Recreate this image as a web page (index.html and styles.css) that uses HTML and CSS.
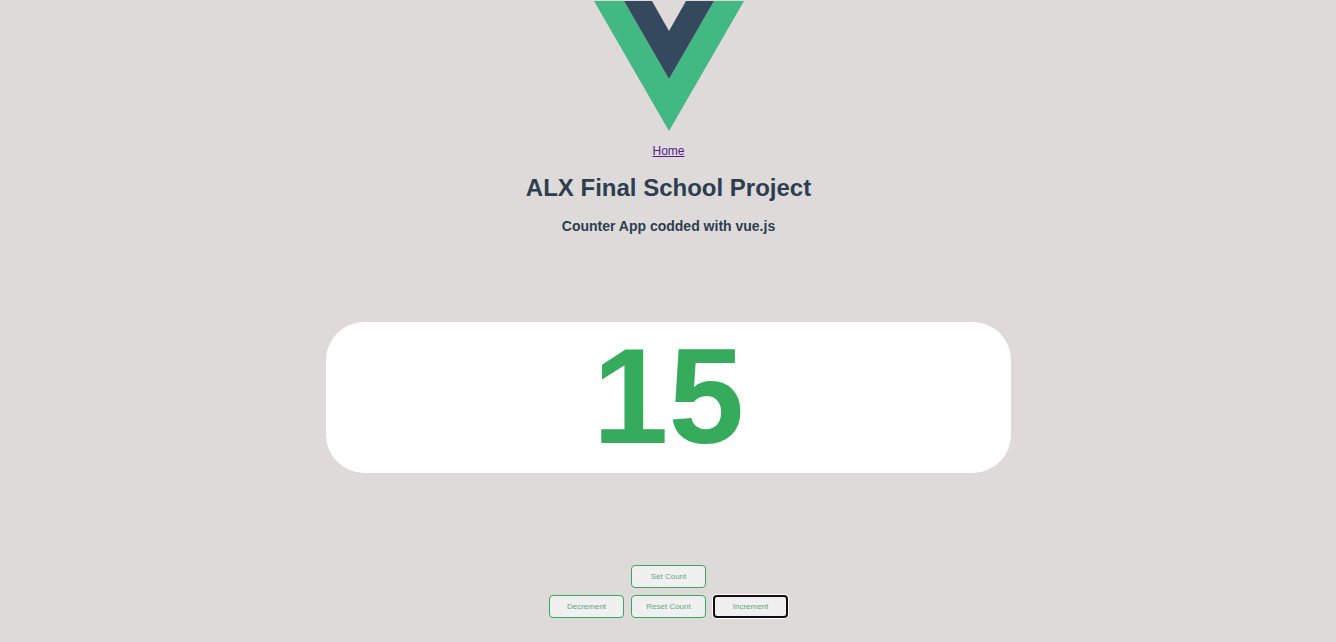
FILE: index.html
```html
<!DOCTYPE html>
<html lang="en">
<head>
<meta charset="utf-8">
<title>Counter App</title>
<link rel="stylesheet" href="styles.css">
</head>
<body>
<div class="app">
  <svg class="logo" viewBox="0 0 150 130" role="img" aria-label="Vue logo">
    <path fill="#42b883" d="M0 0h30l45 78 45-78h30L75 130z"/>
    <path fill="#35495e" d="M30 0h28l17 30 17-30h28L75 78z"/>
  </svg>
  <nav class="nav"><a class="nav-link" href="#">Home</a></nav>
  <h1 class="title">ALX Final School Project</h1>
  <h2 class="subtitle">Counter App codded with vue.js</h2>
  <output class="counter">15</output>
  <div class="controls">
    <button class="btn" type="button">Set Count</button>
    <div class="row">
      <button class="btn" type="button">Decrement</button>
      <button class="btn" type="button">Reset Count</button>
      <button class="btn btn-active" type="button">Increment</button>
    </div>
  </div>
</div>
</body>
</html>
```
FILE: styles.css
```css
body {
  margin: 0;
  background: #dedad9;
  color: #2c3e50;
  font-family: "Liberation Sans", Arial, sans-serif;
}
.app {
  display: flex;
  flex-direction: column;
  align-items: center;
  padding: 1px 0 16px 1px;
}
.logo {
  width: 150px;
  height: 130px;
}
.nav {
  margin-top: 12px;
  font-size: 12px;
  line-height: 16px;
}
.nav-link {
  color: #551a8b;
}
.title {
  margin: 15px 0 0;
  font-size: 24px;
  line-height: 28px;
}
.subtitle {
  margin: 16px 0 0;
  font-size: 14px;
  line-height: 16px;
}
.counter {
  box-sizing: border-box;
  width: 51.3%;
  margin-top: 88px;
  padding-bottom: 2px;
  border-radius: 38px;
  background: #fff;
  color: #35ab5b;
  font-size: 136px;
  font-weight: 700;
  line-height: 149px;
  text-align: center;
}
.controls {
  display: flex;
  flex-direction: column;
  align-items: center;
  gap: 7px;
  margin-top: 92px;
}
.row {
  display: flex;
  gap: 7px;
}
.btn {
  box-sizing: border-box;
  width: 75px;
  height: 23px;
  padding: 0;
  border: 1px solid #35ab5b;
  border-radius: 4px;
  background: #f0f0f0;
  color: #62a87c;
  font-family: inherit;
  font-size: 8px;
}
.btn-active {
  border: 2px solid #101010;
  box-shadow: 0 0 0 1px #fff;
}
```
